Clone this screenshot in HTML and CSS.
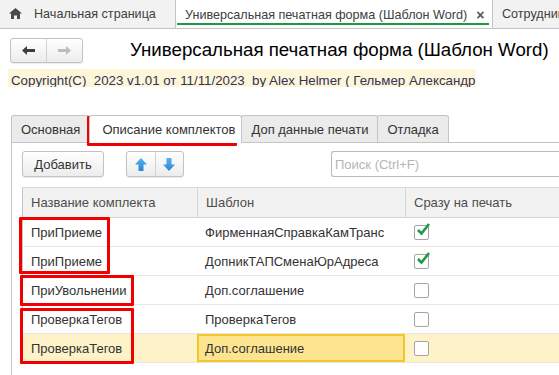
FILE: index.html
```html
<!DOCTYPE html>
<html lang="ru">
<head>
<meta charset="utf-8">
<title>Универсальная печатная форма</title>
<link rel="stylesheet" href="styles.css">
</head>
<body>
<div class="tabbar">
  <div class="wtab home-tab">
    <svg class="home-icon" width="13" height="11" viewBox="0 0 13 11"><path d="M6.5 0 L13 5.5 L11 5.5 L11 11 L8 11 L8 7.5 L5 7.5 L5 11 L2 11 L2 5.5 L0 5.5 Z" fill="#4a4a4a"/></svg>
    <span>Начальная страница</span>
  </div>
  <div class="wtab wtab-active">
    <span>Универсальная печатная форма (Шаблон Word)</span>
    <span class="close">×</span>
  </div>
  <div class="wtab wtab-next"><span>Сотрудники</span></div>
</div>

<div class="header">
  <div class="navgroup">
    <button class="navbtn"><svg width="13" height="9" viewBox="0 0 13 9"><path d="M0 4.5 L5 0 L5 3 L13 3 L13 6 L5 6 L5 9 Z" fill="#3e3e3e"/></svg></button>
    <button class="navbtn"><svg width="13" height="9" viewBox="0 0 13 9"><path d="M13 4.5 L8 0 L8 3 L0 3 L0 6 L8 6 L8 9 Z" fill="#bdbdbd"/></svg></button>
  </div>
  <h1 class="title">Универсальная печатная форма (Шаблон Word)</h1>
</div>

<div class="copyright">Copyright(C)&nbsp; 2023 v1.01 от 11/11/2023&nbsp; by Alex Helmer ( Гельмер Александр</div>

<div class="ftabs">
  <div class="ftab">Основная</div>
  <div class="ftab ftab-active">Описание комплектов</div>
  <div class="ftab">Доп данные печати</div>
  <div class="ftab">Отладка</div>
</div>

<div class="panel">
  <div class="cmdbar">
    <button class="btn">Добавить</button>
    <div class="btngroup">
      <button class="mbtn"><svg width="12" height="13" viewBox="0 0 12 13"><defs><linearGradient id="ga" x1="0" y1="0" x2="0" y2="1"><stop offset="0" stop-color="#52b3ee"/><stop offset="1" stop-color="#2a86cf"/></linearGradient></defs><path d="M6 0 L12 6.5 L8.5 6.5 L8.5 13 L3.5 13 L3.5 6.5 L0 6.5 Z" fill="url(#ga)"/></svg></button>
      <button class="mbtn"><svg width="12" height="13" viewBox="0 0 12 13"><defs><linearGradient id="gb" x1="0" y1="0" x2="0" y2="1"><stop offset="0" stop-color="#52b3ee"/><stop offset="1" stop-color="#2a86cf"/></linearGradient></defs><path d="M6 13 L12 6.5 L8.5 6.5 L8.5 0 L3.5 0 L3.5 6.5 L0 6.5 Z" fill="url(#gb)"/></svg></button>
    </div>
    <div class="search">Поиск (Ctrl+F)</div>
  </div>

  <div class="grid">
    <div class="row head">
      <div class="cell c1">Название комплекта</div>
      <div class="cell c2">Шаблон</div>
      <div class="cell c3">Сразу на печать</div>
    </div>
    <div class="row">
      <div class="cell c1">ПриПриеме</div>
      <div class="cell c2">ФирменнаяСправкаКамТранс</div>
      <div class="cell c3"><span class="chk"><svg width="16" height="14" viewBox="0 0 16 14"><path d="M3 7 L6.5 10.5 L14 1" stroke="#1e9a48" stroke-width="2.6" fill="none"/></svg></span></div>
    </div>
    <div class="row">
      <div class="cell c1">ПриПриеме</div>
      <div class="cell c2">ДопникТАПСменаЮрАдреса</div>
      <div class="cell c3"><span class="chk"><svg width="16" height="14" viewBox="0 0 16 14"><path d="M3 7 L6.5 10.5 L14 1" stroke="#1e9a48" stroke-width="2.6" fill="none"/></svg></span></div>
    </div>
    <div class="row">
      <div class="cell c1">ПриУвольнении</div>
      <div class="cell c2">Доп.соглашение</div>
      <div class="cell c3"><span class="chk"></span></div>
    </div>
    <div class="row">
      <div class="cell c1">ПроверкаТегов</div>
      <div class="cell c2">ПроверкаТегов</div>
      <div class="cell c3"><span class="chk"></span></div>
    </div>
    <div class="row sel">
      <div class="cell c1">ПроверкаТегов</div>
      <div class="cell c2 cur">Доп.соглашение</div>
      <div class="cell c3"><span class="chk"></span></div>
    </div>
    <div class="mark m1"></div>
    <div class="mark m2"></div>
    <div class="mark m3"></div>
  </div>
</div>
<div class="mark tabmark"></div>
</body>
</html>
```

FILE: styles.css
```css
* { box-sizing: border-box; }
html, body { margin: 0; padding: 0; }
body {
  width: 559px;
  height: 375px;
  overflow: hidden;
  background: #fff;
  font-family: "Liberation Sans", Arial, sans-serif;
  font-size: 13px;
  color: #333;
  position: relative;
}
button { font-family: inherit; }

/* window tabs */
.tabbar {
  display: flex;
  height: 29px;
  background: #f2f2f2;
  border-bottom: 1px solid #c4c4c4;
  white-space: nowrap;
  overflow: hidden;
}
.wtab {
  flex: none;
  display: flex;
  align-items: center;
  height: 28px;
  font-size: 12.6px;
  color: #404040;
}
.home-tab { width: 175px; padding-left: 9px; gap: 12px; }
.home-icon { flex: none; margin-top: -1px; }
.wtab-active {
  width: 318px;
  background: #fff;
  border-left: 1px solid #c4c4c4;
  border-right: 1px solid #c4c4c4;
  padding-left: 9px;
  position: relative;
  height: 29px;
  margin-bottom: -1px;
}
.wtab-active::after {
  content: "";
  position: absolute;
  left: 1px; right: 3px; bottom: 4px;
  height: 2px;
  background: #1d9a48;
}
.close { margin-left: 9px; font-weight: bold; color: #555; font-size: 14px; }
.wtab-next { padding-left: 9px; }

/* header */
.header {
  display: flex;
  align-items: center;
  padding: 8px 10px 0;
  height: 34px;
}
.navgroup {
  flex: none;
  display: flex;
  width: 73px;
  height: 25px;
  border: 1px solid #c2c2c2;
  border-radius: 3px;
  background: linear-gradient(#ffffff, #ececec);
  box-shadow: 0 1px 1px rgba(0,0,0,0.08);
}
.navbtn {
  flex: 1;
  border: 0;
  background: transparent;
  padding: 0;
  display: flex;
  align-items: center;
  justify-content: center;
}
.navbtn + .navbtn { border-left: 1px solid #d2d2d2; }
.title {
  margin: 0 0 0 47px;
  font-size: 18.7px;
  font-weight: normal;
  color: #000;
  white-space: nowrap;
}

/* copyright */
.copyright {
  margin: 6px 0 0 8px;
  width: 468px;
  height: 18px;
  line-height: 24px;
  background: #fdf6d8;
  color: #33335a;
  font-size: 13.3px;
  white-space: nowrap;
  overflow: hidden;
  padding-left: 3px;
}

/* form tabs */
.ftabs {
  display: flex;
  margin: 28px 0 0 11px;
  height: 27px;
  white-space: nowrap;
}
.ftab {
  flex: none;
  height: 27px;
  padding: 0 9px;
  display: flex;
  align-items: center;
  border: 1px solid #c4c4c4;
  border-bottom: 0;
  border-radius: 3px 3px 0 0;
  background: #ebebeb;
  color: #333;
  font-size: 13px;
  margin-right: -1px;
}
.ftab-active {
  background: #fff;
  height: 28px;
  margin-bottom: -1px;
  padding: 0 6px 0 12px;
  position: relative;
  z-index: 1;
}

.panel {
  margin-left: 11px;
  border-top: 1px solid #c4c4c4;
  border-left: 1px solid #c4c4c4;
  padding: 8px 0 0 10px;
  height: 240px;
}

.cmdbar {
  display: flex;
  align-items: center;
  height: 26px;
}
.btn {
  flex: none;
  width: 82px;
  height: 26px;
  border: 1px solid #c2c2c2;
  border-radius: 3px;
  background: linear-gradient(#ffffff, #ececec);
  box-shadow: 0 1px 1px rgba(0,0,0,0.08);
  font-size: 13px;
  color: #333;
  padding: 0;
}
.btngroup {
  flex: none;
  display: flex;
  margin-left: 22px;
  width: 58px;
  height: 26px;
  border: 1px solid #c2c2c2;
  border-radius: 3px;
  background: linear-gradient(#ffffff, #ececec);
  box-shadow: 0 1px 1px rgba(0,0,0,0.08);
}
.mbtn {
  flex: 1;
  border: 0;
  background: transparent;
  padding: 0;
  display: flex;
  align-items: center;
  justify-content: center;
}
.mbtn + .mbtn { border-left: 1px solid #d2d2d2; }
.search {
  margin-left: 147px;
  flex: 1;
  height: 26px;
  border: 1px solid #b8b8b8;
  border-right: 0;
  border-radius: 3px 0 0 3px;
  color: #b5b5b5;
  font-size: 13px;
  display: flex;
  align-items: center;
  padding-left: 3px;
  white-space: nowrap;
}

/* grid */
.grid {
  position: relative;
  margin-top: 10px;
  border-left: 1px solid #c4c4c4;
  border-top: 1px solid #d8d8d8;
}
.row {
  display: flex;
  height: 29px;
  border-bottom: 1px solid #e6e6e6;
}
.row.head {
  height: 30px;
  background: #f2f2f2;
  border-bottom: 1px solid #d4d4d4;
  color: #4d4d4d;
}
.cell {
  flex: none;
  display: flex;
  align-items: center;
  padding-left: 8px;
  white-space: nowrap;
  overflow: hidden;
}
.c1 { width: 174px; }
.c2 { width: 208px; }
.c3 { flex: 1; }
.head .cell + .cell { border-left: 1px solid #d4d4d4; }
.row.sel { background: #fdf2c8; }
.cur {
  background: #fde590;
  border: 2px solid #f6c628;
  padding-left: 6px;
}
.chk {
  position: relative;
  width: 15px;
  height: 15px;
  border: 1px solid #a4a4a4;
  border-radius: 2px;
  background: #fff;
  margin-left: 1px;
}
.chk svg { position: absolute; left: 0; top: -3px; }

/* red annotation boxes */
.mark {
  position: absolute;
  border: 3px solid #f00000;
  border-radius: 1px;
}
.m1 { left: -4px; top: 29px; width: 91px; height: 57px; }
.m2 { left: -3px; top: 87px; width: 114px; height: 31px; }
.m3 { left: -3px; top: 120px; width: 114px; height: 56px; }
.tabmark { left: 87px; top: 116px; width: 150px; height: 30px; }
```
